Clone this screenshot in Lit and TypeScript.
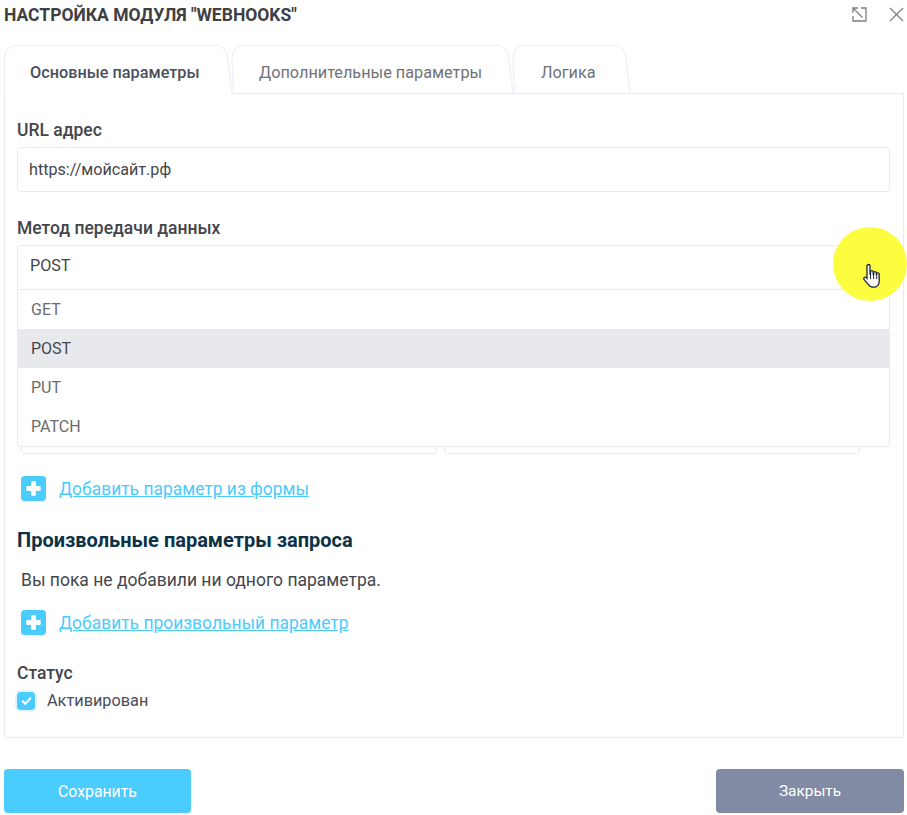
import { LitElement, html, css, svg } from "lit";
import { customElement } from "lit/decorators.js";

const TABS = [
  { label: "Основные параметры", width: 228, left: 26, active: true, first: true },
  { label: "Дополнительные параметры", width: 281, left: 27, active: false, first: false },
  { label: "Логика", width: 117, left: 28, active: false, first: false },
];

function tabPath(w: number, first: boolean) {
  const start = first ? `M0.5 49 V14 Q0.5 1 14 0.5` : `M1.5 49 L0 15 Q0.5 1 11 0.5`;
  return `${start} H${w - 16} Q${w - 7} 0.5 ${w - 5} 15 L${w - 1} 49`;
}

const plus = html`<svg class="plus" viewBox="0 0 26 26" aria-hidden="true">
  <rect width="26" height="26" rx="4" fill="#4accff"></rect>
  <path d="M10.5 6.5a1 1 0 0 1 1-1h3a1 1 0 0 1 1 1v4h4a1 1 0 0 1 1 1v3a1 1 0 0 1-1 1h-4v4a1 1 0 0 1-1 1h-3a1 1 0 0 1-1-1v-4h-4a1 1 0 0 1-1-1v-3a1 1 0 0 1 1-1h4z" fill="#fff"></path>
</svg>`;

@customElement("app-root")
export class AppRoot extends LitElement {
  static styles = css`
    :host {
      display: block;
      width: 907px;
      height: 815px;
      position: relative;
      overflow: hidden;
      background: #fff;
      font-family: Roboto, "Noto Sans", sans-serif;
      font-size: 16.15px;
      color: #44464c;
      box-sizing: border-box;
    }
    * { box-sizing: border-box; }
    .dialog { padding: 0 3px 0 4px; }
    .head {
      height: 45px;
      display: flex;
      align-items: flex-start;
      justify-content: space-between;
    }
    h1 {
      margin: 5px 0 0;
      font-size: 17.5px;
      line-height: 21px;
      font-weight: 700;
      color: #3f4043;
    }
    .head-icons { display: flex; gap: 22px; padding: 7px 0 0 0; }
    .head-icons svg { width: 15px; height: 15px; display: block; }
    .tabs { display: flex; height: 49px; position: relative; z-index: 1; margin-bottom: -1px; font-size: 16.25px; }
    .tab {
      position: relative;
      height: 49px;
      display: flex;
      align-items: center;
      color: #6f7278;
      flex: none;
    }
    .tab.active { color: #4a4f5c; font-weight: 500; }
    .tab svg { position: absolute; left: 0; top: 0; overflow: visible; }
    .tab span { position: relative; padding-top: 5px; }
    .panel {
      border: 1px solid #e8ebf1;
      height: 645px;
      padding: 24px 13px 0 12px;
    }
    .field-label {
      display: block;
      font-size: 17.5px;
      font-weight: 500;
      line-height: 24px;
      height: 24px;
      color: #43454b;
    }
    .input {
      height: 45px;
      margin-top: 5px;
      border: 1px solid #e8ebf1;
      border-radius: 3px;
      display: flex;
      align-items: center;
      padding: 0 12px 0 11px;
      color: #44464c;
      background: #fff;
    }
    .url { margin-bottom: 24px; }
    .select { position: relative; }
    .select .input { border-radius: 3px 3px 0 0; padding: 0 12px 5px 12px; }
    .menu {
      position: absolute;
      left: 0;
      right: 0;
      top: 73px;
      height: 158px;
      background: #fff;
      border: 1px solid #e8ebf1;
      border-radius: 0 0 3px 3px;
      z-index: 2;
    }
    .option {
      height: 39px;
      display: flex;
      align-items: center;
      padding: 0 13px;
      color: #6b6b6b;
      font-size: 16px;
    }
    .option.on { background: #e7e9ed; color: #44464c; }
    .hidden-pair {
      display: grid;
      grid-template-columns: 416px 416px;
      gap: 7px;
      margin: 119px 0 0 4px;
    }
    .hidden-pair div {
      height: 45px;
      border: 1px solid #e8ebf1;
      border-radius: 3px;
    }
    .add {
      display: flex;
      align-items: center;
      gap: 13px;
      margin-left: 4px;
      height: 26px;
      color: #4accff;
      text-decoration: underline;
      font-size: 17.45px;
    }
    .add span { padding-top: 2px; }
    .plus { width: 25px; height: 25px; flex: none; display: block; }
    .add.first { margin-top: 21px; }
    h2 {
      margin: 26px 0 0;
      font-size: 20px;
      line-height: 26px;
      font-weight: 700;
      color: #0b3247;
    }
    .empty { margin: 14px 0 0 4px; line-height: 26px; color: #44464c; font-size: 17.5px; }
    .add.second { margin-top: 16px; }
    .status { margin-top: 26px; }
    .check-row {
      display: flex;
      align-items: center;
      gap: 12px;
      margin-top: 6px;
      color: #4a4c57;
      font-size: 16.3px;
    }
    .check {
      width: 18px;
      height: 18px;
      border-radius: 4px;
      background: #4accff;
      box-shadow: 0 0 0 2px #e0f6ff;
      display: flex;
      align-items: center;
      justify-content: center;
      flex: none;
    }
    .check svg { width: 13px; height: 13px; display: block; }
    .footer {
      display: flex;
      justify-content: space-between;
      margin-top: 31px;
    }
    button {
      font: inherit;
      height: 44px;
      border: none;
      border-radius: 4px;
      color: #fff;
      padding: 0;
    }
    .save { width: 187px; background: #4accff; font-size: 15.8px; }
    .close { width: 188px; background: #828ba4; font-size: 15.4px; }
    .spot {
      position: absolute;
      left: 833px;
      top: 227px;
      width: 74px;
      height: 74px;
      border-radius: 50%;
      background: #fdfd3f;
      z-index: 5;
    }
    .hand { position: absolute; left: 29px; top: 36px; width: 20px; height: 26px; }
  `;

  render() {
    return html`
      <div class="dialog">
        <div class="head">
          <h1>НАСТРОЙКА МОДУЛЯ "WEBHOOKS"</h1>
          <div class="head-icons">
            <svg viewBox="0 0 15 15" fill="none" stroke="#7f7f83" stroke-width="1.3" aria-hidden="true">
              <path d="M1 6V1h5M1.5 1.5l9 9M9 1h5v13H1V9"></path>
            </svg>
            <svg viewBox="0 0 15 15" fill="none" stroke="#7f7f83" stroke-width="1.2" aria-hidden="true">
              <path d="M1 1l13 13M14 1 1 14"></path>
            </svg>
          </div>
        </div>
        <div class="tabs">
          ${TABS.map(
            (t) => html`<div class="tab ${t.active ? "active" : ""}" style="width:${t.width}px;padding-left:${t.left}px">
              <svg width="${t.width}" height="49" fill="${t.active ? "#fff" : "none"}" stroke="#eceff5" stroke-width="1.2" aria-hidden="true">
                ${svg`<path d=${tabPath(t.width + 1, t.first)}></path>`}
              </svg>
              <span>${t.label}</span>
            </div>`
          )}
        </div>
        <div class="panel">
          <div class="url">
            <span class="field-label">URL адрес</span>
            <div class="input">https://мойсайт.рф</div>
          </div>
          <div class="select">
            <span class="field-label">Метод передачи данных</span>
            <div class="input">POST</div>
            <div class="menu">
              ${["GET", "POST", "PUT", "PATCH"].map(
                (o) => html`<div class="option ${o === "POST" ? "on" : ""}">${o}</div>`
              )}
            </div>
          </div>
          <div class="hidden-pair"><div></div><div></div></div>
          <div class="add first">${plus}<span>Добавить параметр из формы</span></div>
          <h2>Произвольные параметры запроса</h2>
          <p class="empty">Вы пока не добавили ни одного параметра.</p>
          <div class="add second">${plus}<span>Добавить произвольный параметр</span></div>
          <div class="status">
            <span class="field-label">Статус</span>
            <div class="check-row">
              <span class="check">
                <svg viewBox="0 0 12 12" fill="none" stroke="#fff" stroke-width="2" aria-hidden="true"><path d="M2 6.2 4.8 9 10 3.5"></path></svg>
              </span>
              Активирован
            </div>
          </div>
        </div>
        <div class="footer">
          <button class="save">Сохранить</button>
          <button class="close">Закрыть</button>
        </div>
      </div>
      <div class="spot">
        <svg class="hand" viewBox="0 0 20 26" aria-hidden="true">
          <path d="M5 3a1.5 1.5 0 0 1 3 0v8l.5.2V8.6a1.4 1.4 0 0 1 2.7 0v2.8h.4V9.7a1.4 1.4 0 0 1 2.7 0v2h.3v-.6a1.3 1.3 0 0 1 2.6 0V18c0 3.6-2.2 6.2-5.6 6.2-2.8 0-4.2-1-5.4-2.8L2 16.4c-1-1.6 1-3 2.2-1.8L5 15.4z" fill="#fff" stroke="#23233a" stroke-width="1.3"></path>
          <path d="M8.5 11v5M11.6 11v5M14.7 11.5V16" stroke="#23233a" stroke-width="1" fill="none"></path>
        </svg>
      </div>
    `;
  }
}
